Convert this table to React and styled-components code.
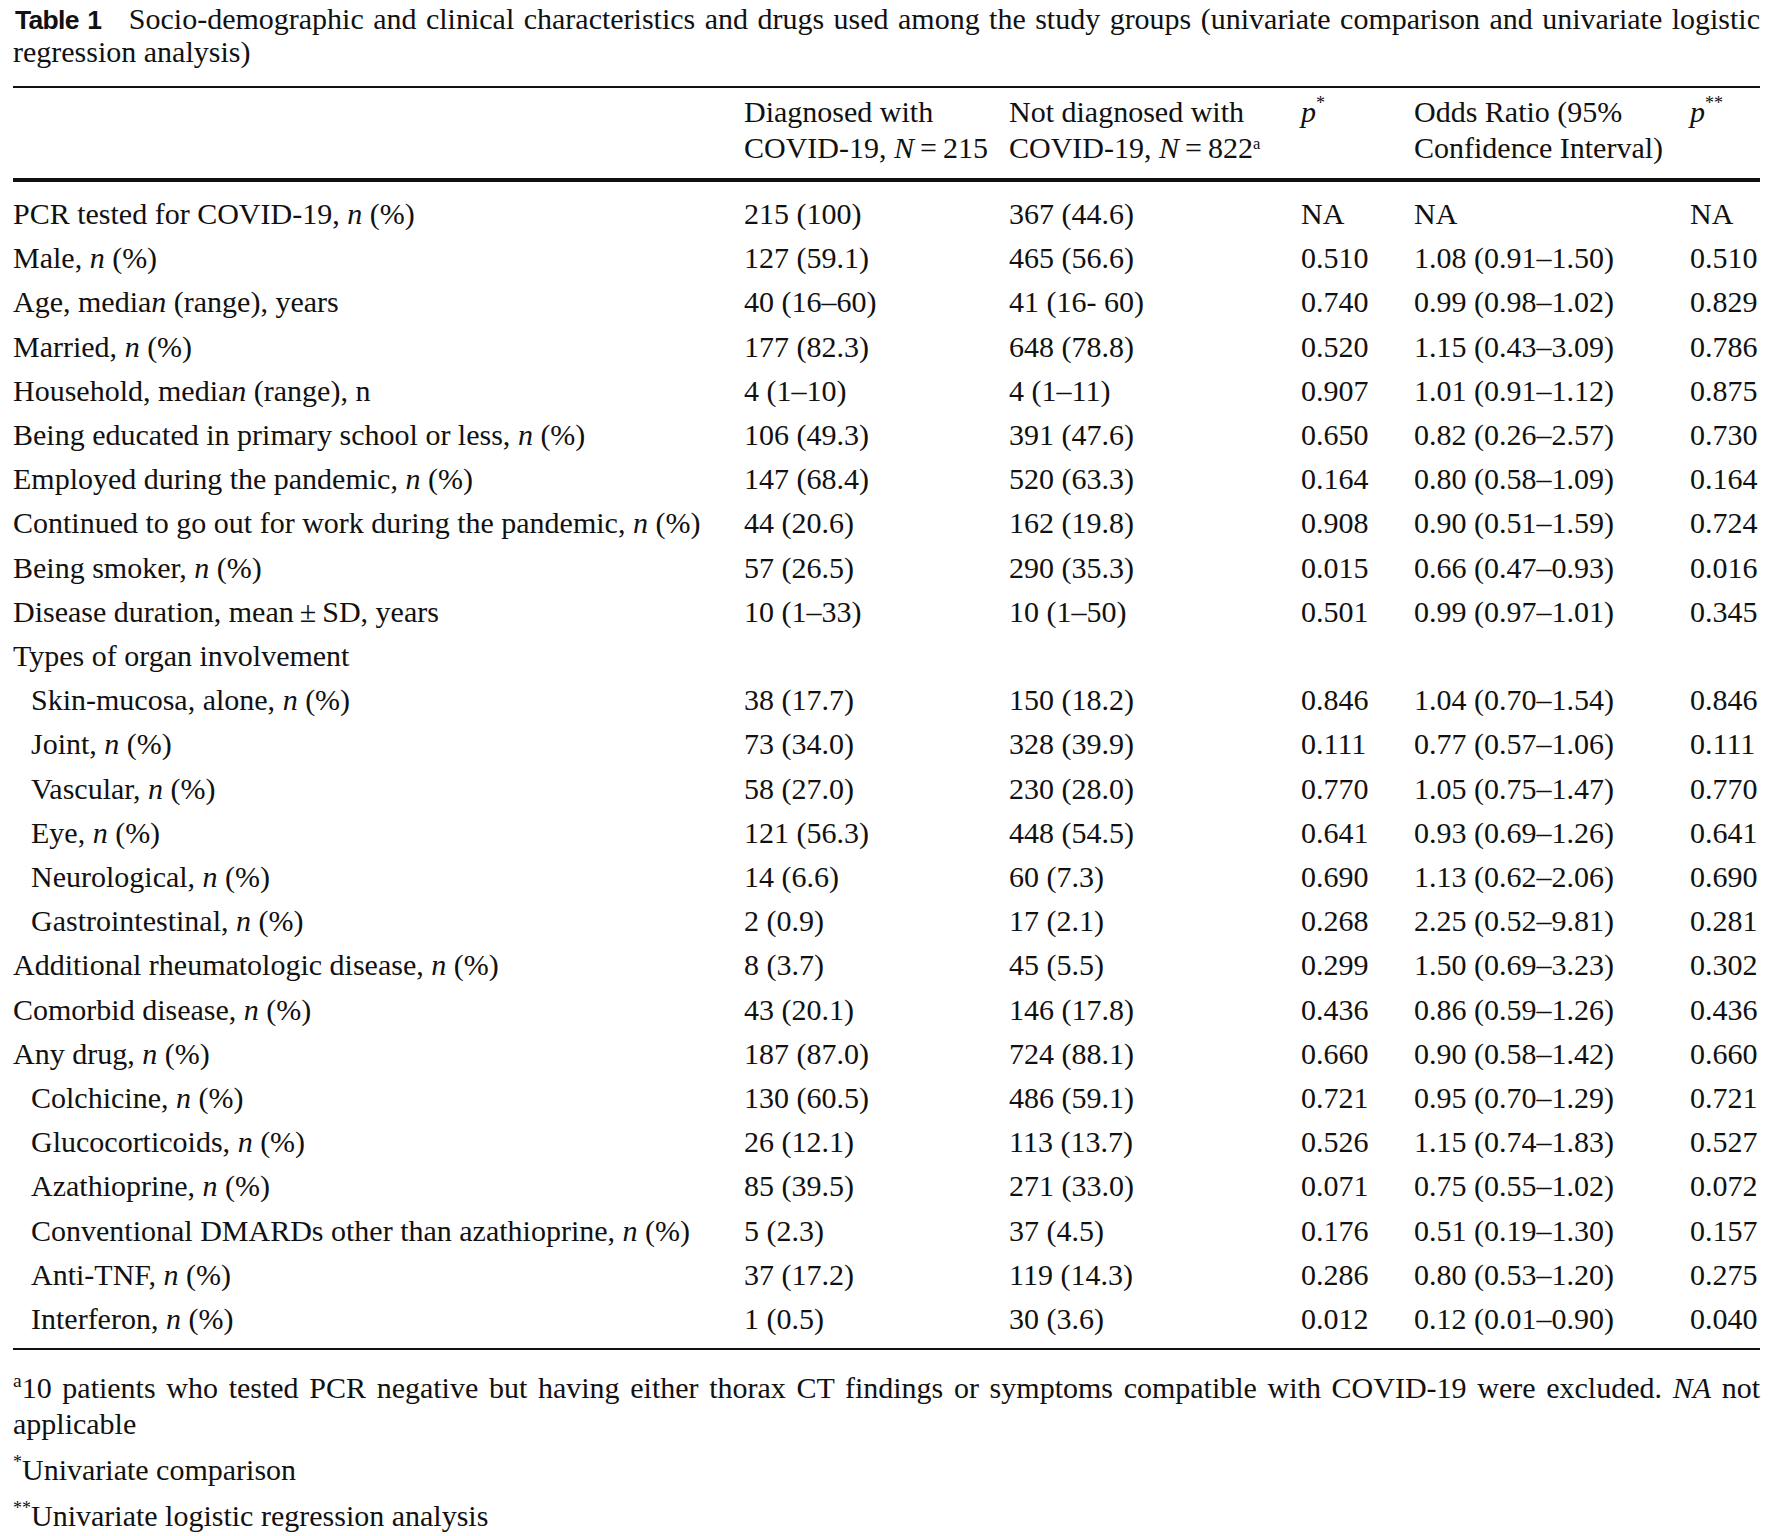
import React from 'react';
import styled, { createGlobalStyle } from 'styled-components';

const GlobalStyle = createGlobalStyle`
	html, body {
		margin: 0;
		padding: 0;
		background: #fff;
	}
	body {
		font-family: 'Liberation Serif', 'Times New Roman', serif;
		color: #111;
	}
`;

const columns = '731px 265px 292px 113px 276px 1fr';

const Page = styled.main`
	width: 1774px;
	box-sizing: border-box;
	padding: 3px 14px 0 13px;
	font-size: 30px;
`;

const Caption = styled.div`
	line-height: 32px;
	margin-bottom: 18px;
`;

const CaptionLine = styled.div`
	text-align: ${(props) => (props.justify ? 'justify' : 'left')};
	text-align-last: ${(props) => (props.justify ? 'justify' : 'left')};
`;

const CaptionLabel = styled.b`
	font-family: 'Liberation Sans', Arial, sans-serif;
	font-weight: 700;
	font-size: 26.5px;
	letter-spacing: -0.7px;
	margin-left: 2px;
	margin-right: 18px;
`;

const Table = styled.section`
	border-top: 2px solid #111;
	border-bottom: 2px solid #111;
`;

const Head = styled.div`
	display: grid;
	grid-template-columns: ${columns};
	padding: 6px 0 12px;
	line-height: 36px;
	border-bottom: 4px solid #111;
`;

const Body = styled.div`
	padding: 10px 0 7px;
`;

const Row = styled.div`
	display: grid;
	grid-template-columns: ${columns};
	line-height: 44.2px;
`;

const Cell = styled.div`
	white-space: nowrap;
	padding-left: ${(props) => (props.indent ? '18px' : '0')};
`;

const Sup = styled.sup`
	font-size: ${(props) => props.size || '0.6em'};
	vertical-align: ${(props) => props.lift || '0.55em'};
	line-height: 0;
`;

const Notes = styled.div`
	margin-top: 20px;
	line-height: 36px;
`;

const Note = styled.p`
	margin: ${(props) => (props.first ? '0' : '10px 0 0')};
`;

const NoteLine = styled.span`
	display: block;
	text-align: ${(props) => (props.justify ? 'justify' : 'left')};
	text-align-last: ${(props) => (props.justify ? 'justify' : 'left')};
`;

// underscores mark italic runs: "Male, _n_ (%)"
const rich = (str) =>
	str.split('_').map((part, i) => (i % 2 ? <i key={i}>{part}</i> : <React.Fragment key={i}>{part}</React.Fragment>));

const rows = [
	['PCR tested for COVID-19, _n_ (%)', '215 (100)', '367 (44.6)', 'NA', 'NA', 'NA'],
	['Male, _n_ (%)', '127 (59.1)', '465 (56.6)', '0.510', '1.08 (0.91–1.50)', '0.510'],
	['Age, media_n_ (range), years', '40 (16–60)', '41 (16- 60)', '0.740', '0.99 (0.98–1.02)', '0.829'],
	['Married, _n_ (%)', '177 (82.3)', '648 (78.8)', '0.520', '1.15 (0.43–3.09)', '0.786'],
	['Household, media_n_ (range), n', '4 (1–10)', '4 (1–11)', '0.907', '1.01 (0.91–1.12)', '0.875'],
	['Being educated in primary school or less, _n_ (%)', '106 (49.3)', '391 (47.6)', '0.650', '0.82 (0.26–2.57)', '0.730'],
	['Employed during the pandemic, _n_ (%)', '147 (68.4)', '520 (63.3)', '0.164', '0.80 (0.58–1.09)', '0.164'],
	['Continued to go out for work during the pandemic, _n_ (%)', '44 (20.6)', '162 (19.8)', '0.908', '0.90 (0.51–1.59)', '0.724'],
	['Being smoker, _n_ (%)', '57 (26.5)', '290 (35.3)', '0.015', '0.66 (0.47–0.93)', '0.016'],
	['Disease duration, mean\u2009±\u2009SD, years', '10 (1–33)', '10 (1–50)', '0.501', '0.99 (0.97–1.01)', '0.345'],
	['Types of organ involvement', '', '', '', '', ''],
	['Skin-mucosa, alone, _n_ (%)', '38 (17.7)', '150 (18.2)', '0.846', '1.04 (0.70–1.54)', '0.846', true],
	['Joint, _n_ (%)', '73 (34.0)', '328 (39.9)', '0.111', '0.77 (0.57–1.06)', '0.111', true],
	['Vascular, _n_ (%)', '58 (27.0)', '230 (28.0)', '0.770', '1.05 (0.75–1.47)', '0.770', true],
	['Eye, _n_ (%)', '121 (56.3)', '448 (54.5)', '0.641', '0.93 (0.69–1.26)', '0.641', true],
	['Neurological, _n_ (%)', '14 (6.6)', '60 (7.3)', '0.690', '1.13 (0.62–2.06)', '0.690', true],
	['Gastrointestinal, _n_ (%)', '2 (0.9)', '17 (2.1)', '0.268', '2.25 (0.52–9.81)', '0.281', true],
	['Additional rheumatologic disease, _n_ (%)', '8 (3.7)', '45 (5.5)', '0.299', '1.50 (0.69–3.23)', '0.302'],
	['Comorbid disease, _n_ (%)', '43 (20.1)', '146 (17.8)', '0.436', '0.86 (0.59–1.26)', '0.436'],
	['Any drug, _n_ (%)', '187 (87.0)', '724 (88.1)', '0.660', '0.90 (0.58–1.42)', '0.660'],
	['Colchicine, _n_ (%)', '130 (60.5)', '486 (59.1)', '0.721', '0.95 (0.70–1.29)', '0.721', true],
	['Glucocorticoids, _n_ (%)', '26 (12.1)', '113 (13.7)', '0.526', '1.15 (0.74–1.83)', '0.527', true],
	['Azathioprine, _n_ (%)', '85 (39.5)', '271 (33.0)', '0.071', '0.75 (0.55–1.02)', '0.072', true],
	['Conventional DMARDs other than azathioprine, _n_ (%)', '5 (2.3)', '37 (4.5)', '0.176', '0.51 (0.19–1.30)', '0.157', true],
	['Anti-TNF, _n_ (%)', '37 (17.2)', '119 (14.3)', '0.286', '0.80 (0.53–1.20)', '0.275', true],
	['Interferon, _n_ (%)', '1 (0.5)', '30 (3.6)', '0.012', '0.12 (0.01–0.90)', '0.040', true],
];

export default function App() {
	return (
		<Page>
			<GlobalStyle />
			<Caption>
				<CaptionLine justify>
					<CaptionLabel>Table 1</CaptionLabel> Socio-demographic and clinical characteristics and drugs used
					among the study groups (univariate comparison and univariate logistic
				</CaptionLine>
				<CaptionLine>regression analysis)</CaptionLine>
			</Caption>

			<Table>
				<Head>
					<Cell />
					<Cell>
						Diagnosed with
						<br />
						COVID-19, <i>N</i>{'\u2009=\u2009'}215
					</Cell>
					<Cell>
						Not diagnosed with
						<br />
						COVID-19, <i>N</i>{'\u2009=\u2009'}822<Sup size="0.55em">a</Sup>
					</Cell>
					<Cell>
						<i>p</i>
						<Sup lift="0.75em">*</Sup>
					</Cell>
					<Cell>
						Odds Ratio (95%
						<br />
						Confidence Interval)
					</Cell>
					<Cell>
						<i>p</i>
						<Sup lift="0.75em">**</Sup>
					</Cell>
				</Head>
				<Body>
					{rows.map(([label, a, b, p1, or, p2, indent]) => (
						<Row key={label}>
							<Cell indent={indent}>{rich(label)}</Cell>
							<Cell>{a}</Cell>
							<Cell>{b}</Cell>
							<Cell>{p1}</Cell>
							<Cell>{or}</Cell>
							<Cell>{p2}</Cell>
						</Row>
					))}
				</Body>
			</Table>

			<Notes>
				<Note first>
					<NoteLine justify>
						<Sup size="0.65em">a</Sup>10 patients who tested PCR negative but having either thorax CT findings or
						symptoms compatible with COVID-19 were excluded. <i>NA</i> not
					</NoteLine>
					<NoteLine>applicable</NoteLine>
				</Note>
				<Note>
					<Sup lift="0.65em">*</Sup>Univariate comparison
				</Note>
				<Note>
					<Sup lift="0.65em">**</Sup>Univariate logistic regression analysis
				</Note>
			</Notes>
		</Page>
	);
}
